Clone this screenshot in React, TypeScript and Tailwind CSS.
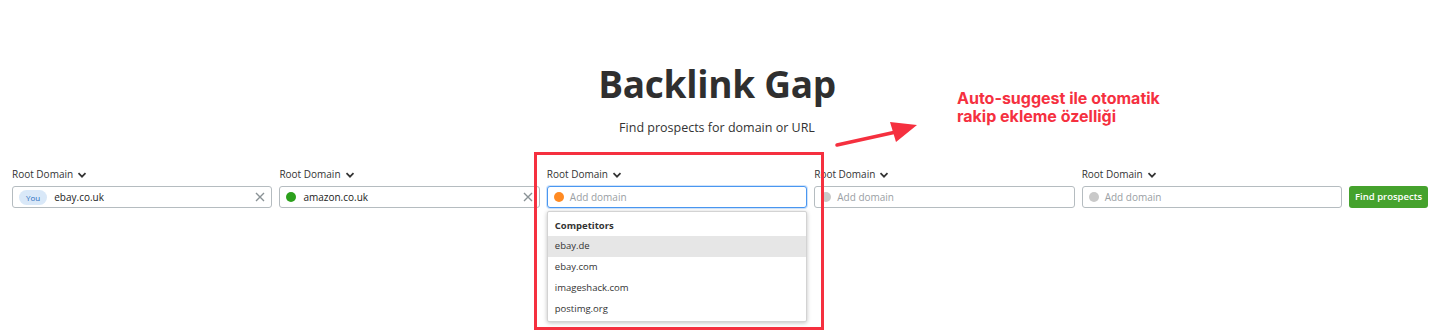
import React from "react";

type Field = {
  value?: string;
  dot?: string;
  you?: boolean;
  focused?: boolean;
};

const fields: Field[] = [
  { value: "ebay.co.uk", you: true },
  { value: "amazon.co.uk", dot: "bg-[#2ca01c]" },
  { dot: "bg-[#ff8a22]", focused: true },
  { dot: "bg-[#c9c9c9]" },
  { dot: "bg-[#c9c9c9]" },
];

const competitors = ["ebay.de", "ebay.com", "imageshack.com", "postimg.org"];

const Chevron = () => (
  <svg width="10" height="10" viewBox="0 0 10 10" className="ml-[4px]">
    <path d="M1.5 3.2 L5 6.7 L8.5 3.2" fill="none" stroke="#333" strokeWidth="1.7" />
  </svg>
);

const Clear = () => (
  <svg width="10" height="10" viewBox="0 0 10 10">
    <path d="M1 1 L9 9 M9 1 L1 9" stroke="#8a9296" strokeWidth="1.4" />
  </svg>
);

const DomainField = ({ field }: { field: Field }) => (
  <div className="relative flex-1 min-w-0">
    <div className="flex items-center h-[17px] text-[10px] text-[#333]">
      Root Domain
      <Chevron />
    </div>
    <div
      className={
        field.focused
          ? "mt-[3px] h-[22px] flex items-center px-[6px] rounded-[3px] border border-[#4a97f0] shadow-[0_0_0_1px_#cfe3fb] bg-white"
          : "mt-[3px] h-[22px] flex items-center px-[6px] rounded-[3px] border border-[#b5bcc0] bg-white"
      }
    >
      {field.you && (
        <span className="h-[15px] px-[7px] rounded-full bg-[#d9e8f8] text-[#2a6fbf] text-[8px] leading-[15px]">
          You
        </span>
      )}
      {field.dot && <span className={"w-[10px] h-[10px] rounded-full " + field.dot} />}
      <span
        className={
          field.value
            ? "ml-[7px] flex-1 text-[10px] text-[#222]"
            : "ml-[6px] flex-1 text-[10px] text-[#9aa0a4]"
        }
      >
        {field.value ?? "Add domain"}
      </span>
      {field.value && <Clear />}
    </div>
    {field.focused && (
      <div className="absolute left-0 right-0 top-[45px] z-10 bg-white border border-[#d3d3d3] rounded-[2px] shadow-[0_1px_4px_rgba(0,0,0,0.25)] pt-[4px] pb-[1px]">
        <div className="h-[20px] px-[7px] flex items-center text-[9.5px] font-bold text-[#333]">
          Competitors
        </div>
        {competitors.map((c, i) => (
          <div
            key={c}
            className={
              i === 0
                ? "h-[21px] px-[7px] flex items-center text-[9.5px] text-[#333] bg-[#e6e6e6]"
                : "h-[21px] px-[7px] flex items-center text-[9.5px] text-[#333]"
            }
          >
            {c}
          </div>
        ))}
      </div>
    )}
  </div>
);

export default function App() {
  return (
    <div className="relative w-[1434px] h-[336px] bg-white font-['Open_Sans',sans-serif] overflow-hidden">
      <div className="pt-[57px] flex flex-col items-center">
        <h1 className="text-[37px] leading-[54px] font-bold text-[#2f2f2f] tracking-[-0.3px]">Backlink Gap</h1>
        <p className="mt-[8px] text-[12.5px] leading-[18px] text-[#333]">Find prospects for domain or URL</p>
      </div>

      <div className="mt-[29px] pl-[12px] pr-[6px] flex items-end gap-[7px]">
        {fields.map((f, i) => (
          <DomainField key={i} field={f} />
        ))}
        <button className="w-[79px] h-[22px] shrink-0 rounded-[3px] bg-[#45a22d] text-white text-[9.5px] font-semibold">
          Find prospects
        </button>
      </div>

      {/* annotation overlay */}
      <div className="absolute left-[534px] top-[152px] w-[290px] h-[178px] border-[3px] border-[#f5303f] pointer-events-none z-20" />
      <svg className="absolute left-[830px] top-[115px] z-20" width="100" height="40" viewBox="0 0 100 40">
        <path d="M7 30 L66 17" stroke="#f5303f" strokeWidth="3.5" strokeLinecap="round" />
        <path d="M60 7 L87 10 L66 27 Z" fill="#f5303f" />
      </svg>
      <div className="absolute left-[957px] top-[89px] text-[16px] leading-[18px] font-bold text-[#f5303f] font-['Inter',sans-serif]">
        Auto-suggest ile otomatik
        <br />
        rakip ekleme özelliği
      </div>
    </div>
  );
}
